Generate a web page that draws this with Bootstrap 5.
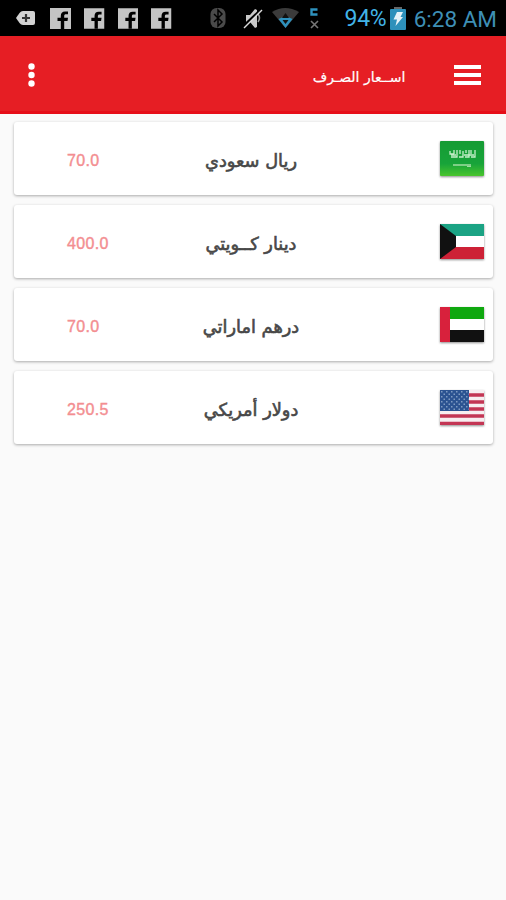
<!DOCTYPE html>
<html lang="ar">
<head>
<meta charset="utf-8">
<meta name="viewport" content="width=device-width, initial-scale=1">
<title>اسعار الصرف</title>
<link href="https://cdn.jsdelivr.net/npm/bootstrap@5.3.0/dist/css/bootstrap.min.css" rel="stylesheet">
<style>
  body { background: #fafafa; font-family: "Liberation Sans", "DejaVu Sans", sans-serif; min-height: 900px; }
  svg { display: block; flex: none; }
  .status { height: 36px; background: #000; padding: 0 9px 0 16px; color: #3aa6d8; font-family: Roboto, sans-serif; }
  .notices { gap: 13px; }
  .notices svg:first-child { margin-right: 1px; }
  .radios { margin-left: 38px; }
  .battery-level { font-size: 23px; line-height: 36px; width: 42px; margin-left: 25px; padding-top: 2px; letter-spacing: -.3px; color: #42b4e8; white-space: nowrap; }
  .battery { margin-left: 3px; }
  .clock { font-size: 22.500px; line-height: 36px; padding-top: 2px; white-space: nowrap; color: #3e8fb5; }
  .appbar { height: 78px; background: #e61e24; border-bottom: 3px solid #e60d18; padding: 2px 25px 0 28px; }
  .page-title { font: 14px/20px "DejaVu Sans", sans-serif; color: #fff; margin-right: 48.500px; padding-top: 5px; -webkit-text-stroke: .2px #fff; }
  .rates { padding: 8px 13px 0 14px; gap: 10px; }
  .rate { height: 73px; border: 0; border-radius: 3px; box-shadow: 0 1px 3px rgba(0,0,0,.32); display: grid; grid-template-columns: 53px 120px 128px 1fr; align-items: center; padding-right: 9px; }
  .amount { grid-column: 2; font-size: 16px; letter-spacing: .35px; line-height: 20px; color: #f38e91; -webkit-text-stroke: .4px #f38e91; padding-top: 5px; }
  .currency { font: 17.800px/26px "DejaVu Sans", sans-serif; color: #484848; -webkit-text-stroke: .6px #484848; text-align: center; padding-top: 4px; white-space: nowrap; }
  .flag { justify-self: end; margin-top: -1px; filter: drop-shadow(0 1px 1px rgba(0,0,0,.45)); }
</style>
</head>
<body>
<svg width="0" height="0" class="position-absolute">
  <symbol id="fb" viewBox="0 0 21 21"><path fill="#c4c4c4" d="M0 0h21v21H0z"/><path d="M10.800 21v-8H7.500V9.800h3.300V8C10.800 5 12.300 3.500 15 3.500h3v2.800h-2c-1.300 0-1.800.5-1.800 1.800v1.700H18l-.5 3.200h-3.300v8z" fill="#000"/></symbol>
</svg>
<header>
  <div class="status d-flex align-items-center">
    <div class="notices d-flex align-items-center">
      <svg width="20" height="16" viewBox="0 0 20 16"><path fill="#d2d2d2" d="M0 8l3.500-5Q5 1 7 1h10q2 0 2 2v10q0 2-2 2H7q-2 0-3.500-2z"/><path d="M10 4v8M6 8h8" stroke="#333" stroke-width="2.200"/></svg>
      <svg width="21" height="21"><use href="#fb"/></svg>
      <svg width="20.500" height="21"><use href="#fb"/></svg>
      <svg width="20.500" height="21"><use href="#fb"/></svg>
      <svg width="20.500" height="21"><use href="#fb"/></svg>
    </div>
    <div class="radios">
      <svg width="110" height="24" viewBox="0 0 110 24">
        <rect x=".5" y="2" width="15" height="20" rx="6" fill="#4a4a4a"/>
        <path d="M4 8l8 8-4 4V4l4 4-8 8" fill="none" stroke="#000" stroke-width="1.500"/>
        <path fill="#c9c9c9" d="M36 9h4l5-6 2 1v17l-2 1-5-6h-4z"/>
        <path d="M48 8q3 4 0 8" fill="none" stroke="#999" stroke-width="1.500"/>
        <path d="M33 20.500L51 3.500" stroke="#000" stroke-width="2.500"/><path d="M34 22L52 4" stroke="#ddd" stroke-width="1.500"/>
        <path fill="#3b3b3b" d="M62 6q13-8 27 0L75.500 22z"/>
        <path fill="#2e91bd" d="M68.500 13q7-4 14 0l-7 9z"/>
        <path fill="#111" d="M75.500 7l3.500 5h-7zM72.500 14h6l-3 4z"/>
        <path d="M107.500 3.500h-6v5h6" fill="none" stroke="#2e91bd" stroke-width="2.400"/>
        <path d="M101 15l7 7M108 15l-7 7" stroke="#777" stroke-width="1.600"/>
      </svg>
    </div>
    <span class="battery-level">94%</span>
    <svg width="16" height="23" viewBox="0 0 16 23" class="battery"><path fill="#666" d="M4 0h8v3H4z"/><rect y="2" width="16" height="21" rx="1" fill="#2d91bb"/><path fill="#e5f3f8" d="M7 5h6l-2.500 5H13l-7.500 9L7 12.500H3.500z"/></svg>
    <span class="clock ms-auto">6:28 AM</span>
  </div>
  <nav class="appbar d-flex align-items-center">
    <svg width="7" height="24" viewBox="0 0 7 24" fill="#fff"><circle cx="3.500" cy="3.500" r="3.200"/><circle cx="3.500" cy="12" r="3.200"/><circle cx="3.500" cy="20.500" r="3.200"/></svg>
    <h1 class="page-title ms-auto mb-0" dir="rtl">اســعار الصـرف</h1>
    <svg width="27" height="20" viewBox="0 0 27 20" fill="#fff"><path d="M0 0h27v4H0zM0 8h27v4H0zM0 16h27v4H0z"/></svg>
  </nav>
</header>
<main class="rates d-flex flex-column">
  <div class="card rate">
    <span class="amount">70.0</span><span class="currency" dir="rtl">ريال سعودي</span>
    <svg class="flag" width="44" height="35" viewBox="0 0 44 35">
      <defs><linearGradient id="saudi" x2="0" y2="1"><stop stop-color="#159b34"/><stop offset=".65" stop-color="#18a43a"/><stop offset="1" stop-color="#4ac52d"/></linearGradient></defs>
      <rect width="44" height="35" rx="1" fill="url(#saudi)"/>
      <path d="M10 10v3h4M11 16h6V9M14 9v4M19 16h4v-6M20 9v4M25 16h4V9M26 12v-3M31 16h4V9M31 9v4M11 14h5M24 14h10" fill="none" stroke="#c5efc9" stroke-width="1.300"/>
      <path d="M13 24h18" stroke="#a0dca2" stroke-width="1.500"/><path d="M27 25.500h4" stroke="#a0dca2"/>
    </svg>
  </div>
  <div class="card rate">
    <span class="amount">400.0</span><span class="currency" dir="rtl">دينار كــويتي</span>
    <svg class="flag" width="44" height="35" viewBox="0 0 44 35"><path fill="#fff" d="M0 0h44v35H0z"/><path fill="#1ba384" d="M0 0h44v12H0z"/><path fill="#cd2136" d="M0 23h44v12H0z"/><path fill="#111" d="M0 0l16 12v11L0 35z"/></svg>
  </div>
  <div class="card rate">
    <span class="amount">70.0</span><span class="currency" dir="rtl">درهم اماراتي</span>
    <svg class="flag" width="44" height="35" viewBox="0 0 44 35"><path fill="#fff" d="M0 0h44v35H0z"/><path fill="#0fa80f" d="M0 0h44v12H0z"/><path fill="#111" d="M0 23h44v12H0z"/><path fill="#d8213c" d="M0 0h10v35H0z"/></svg>
  </div>
  <div class="card rate">
    <span class="amount">250.5</span><span class="currency" dir="rtl">دولار أمريكي</span>
    <svg class="flag" width="44" height="35" viewBox="0 0 44 35">
      <defs><pattern id="stars" width="5" height="5" patternUnits="userSpaceOnUse"><path fill="#7f9cc3" d="M1 1h1.500v1.500H1zM3.500 3.500H5V5H3.500z"/></pattern></defs>
      <path fill="#f7eef0" d="M0 0h44v35H0z"/>
      <path d="M0 5h44M0 12h44M0 19h44M0 26h44M0 33.300h44" stroke="#c33654" stroke-width="3.300"/>
      <path fill="#2b5391" d="M0 0h29v21H0z"/><path fill="url(#stars)" d="M0 0h29v21H0z"/>
    </svg>
  </div>
</main>
<script src="https://cdn.jsdelivr.net/npm/bootstrap@5.3.0/dist/js/bootstrap.bundle.min.js"></script>
</body>
</html>
